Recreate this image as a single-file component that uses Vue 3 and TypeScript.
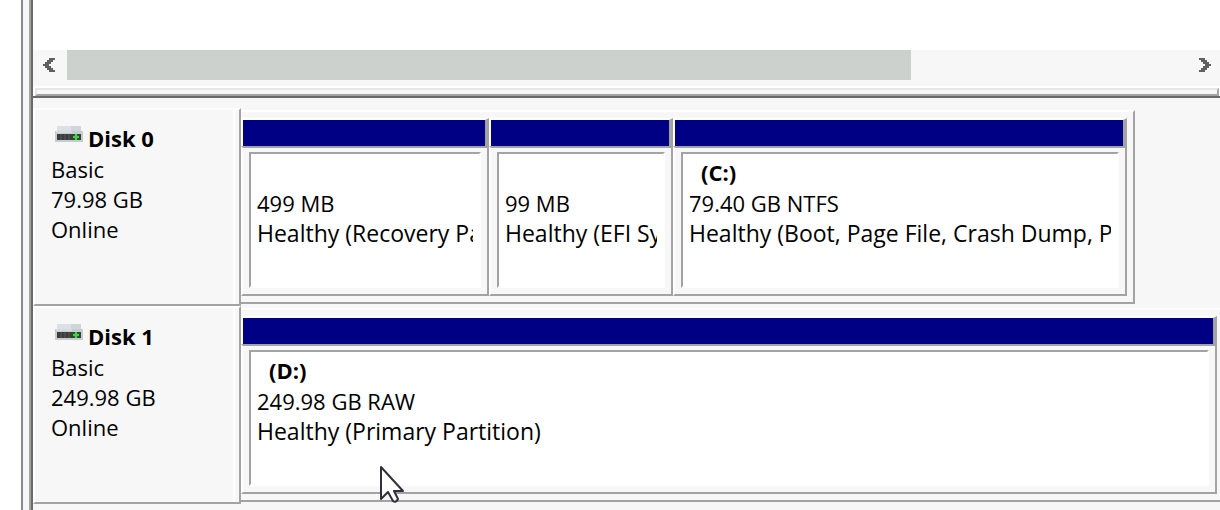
<script setup lang="ts">
interface Partition {
  name: string
  size: string
  status: string
  span: number
}

interface Disk {
  name: string
  kind: string
  capacity: string
  state: string
  full: boolean
  partitions: Partition[]
}

const disks: Disk[] = [
  {
    name: 'Disk 0',
    kind: 'Basic',
    capacity: '79.98 GB',
    state: 'Online',
    full: false,
    partitions: [
      { name: '', size: '499 MB', status: 'Healthy (Recovery Pa', span: 248 },
      { name: '', size: '99 MB', status: 'Healthy (EFI Sy', span: 184 },
      { name: '(C:)', size: '79.40 GB NTFS', status: 'Healthy (Boot, Page File, Crash Dump, P', span: 454 },
    ],
  },
  {
    name: 'Disk 1',
    kind: 'Basic',
    capacity: '249.98 GB',
    state: 'Online',
    full: true,
    partitions: [
      { name: '(D:)', size: '249.98 GB RAW', status: 'Healthy (Primary Partition)', span: 976 },
    ],
  },
]
</script>

<template>
  <div class="window">
    <div class="gutter"></div>
    <main class="console">
      <section class="volumes">
        <div class="list"></div>
        <div class="scrollbar">
          <button class="arrow back" type="button" aria-label="Scroll left">
            <svg width="12" height="14" viewBox="0 0 12 14" shape-rendering="crispEdges">
              <path fill="#606060" d="M6 0h6v2h-2v2H8v2H6v2h2v2h2v2h2v2H6v-2H4v-2H2V8H0V6h2V4h2V2h2z" />
            </svg>
          </button>
          <div class="track"><div class="thumb"></div></div>
          <button class="arrow forward" type="button" aria-label="Scroll right">
            <svg width="12" height="14" viewBox="0 0 12 14" shape-rendering="crispEdges">
              <path fill="#606060" d="M6 0H0v2h2v2h2v2h2v2H4v2H2v2H0v2h6v-2h2v-2h2V8h2V6h-2V4H8V2H6z" />
            </svg>
          </button>
        </div>
        <div class="splitter"></div>
      </section>

      <section class="disks">
        <article v-for="disk in disks" :key="disk.name" class="disk">
          <div class="label">
            <h2 class="title">
              <svg class="drive" width="28" height="16" viewBox="0 0 28 16">
                <path fill="#dce0e4" d="M2 0h24v5H2z" />
                <path fill="#d0d5d9" d="M16 0h10v5H16z" />
                <path fill="#c6cdd0" d="M0 5h28v11H0z" />
                <path fill="#d6dbdf" d="M1 5h16v2H1z" />
                <path fill="#3b3e3b" d="M2 8h24v6H2z" />
                <path fill="#484b48" d="M5 8h2v6H5zM9 8h2v6H9zM13 8h2v6h-2z" />
                <path fill="#158c1b" d="M19 9h4v4h-4z" />
                <path fill="#39d93d" d="M20 8h2v6h-2zM18 10h6v2h-6z" />
              </svg>
              <span>{{ disk.name }}</span>
            </h2>
            <p>{{ disk.kind }}</p>
            <p>{{ disk.capacity }}</p>
            <p>{{ disk.state }}</p>
          </div>
          <div class="graph" :class="{ full: disk.full }">
            <div
              v-for="part in disk.partitions"
              :key="part.size"
              class="partition"
              :style="{ flexGrow: part.span }"
            >
              <div class="stripe"></div>
              <div class="body">
                <div class="box">
                  <p class="name">{{ part.name }}</p>
                  <p>{{ part.size }}</p>
                  <p class="status">{{ part.status }}</p>
                </div>
              </div>
            </div>
          </div>
        </article>
      </section>
    </main>

    <svg class="cursor" width="26" height="40" viewBox="0 0 26 40">
      <path
        fill="#fff"
        stroke="#30303c"
        stroke-width="2"
        stroke-linejoin="round"
        d="M2 2v32l7-7 5 9q3 2 5-2l-4-8h9z"
      />
    </svg>
  </div>
</template>

<style>
body {
  margin: 0;
  background: #fff;
}
</style>

<style scoped>
.window {
  position: relative;
  display: flex;
  height: 100vh;
  padding-left: 21px;
  overflow: hidden;
  box-sizing: border-box;
  color: #000;
  font-family: "Open Sans", "Noto Sans", sans-serif;
  font-size: 22px;
  line-height: 30px;
}

.gutter {
  flex: none;
  width: 6px;
  border-left: 2px solid #858996;
  border-right: 2px solid #a3a3a3;
  background: #f7f7f7;
}

.console {
  flex: 1;
  min-width: 0;
  border-left: 2px solid #696969;
}

.volumes {
  border-bottom: 2px solid #696969;
}

.list {
  height: 50px;
  background: #fff;
}

.scrollbar {
  display: flex;
  height: 30px;
  padding-bottom: 6px;
  border-bottom: 2px solid #fff;
  background: #f7f7f7;
}

.arrow {
  display: grid;
  place-items: center;
  box-sizing: border-box;
  width: 34px;
  padding: 0;
  border: 0;
  background: transparent;
}

.arrow.back {
  padding-right: 2px;
}

.arrow.forward {
  padding-left: 4px;
}

.track {
  flex: 1;
}

.thumb {
  width: 75.4%;
  height: 100%;
  background: #cdd1cd;
}

.splitter {
  height: 4px;
  margin: 0 1px 0 2px;
  border: 2px solid #a3a3a3;
  border-top-color: #e6e6e6;
  border-left-color: #e6e6e6;
  background: #f7f7f7;
}

.disks {
  height: 100%;
  padding-top: 10px;
  background: #f7f7f7;
}

.disk {
  display: flex;
  height: 198px;
}

.label {
  flex: none;
  width: 188px;
  padding: 13px 0 0 16px;
  border: 2px solid #fff;
  border-right-color: #a3a3a3;
  border-bottom-color: #a3a3a3;
  box-shadow: inset -4px 0 #f7f7f7, inset -6px 0 #fff;
}

.title {
  display: flex;
  align-items: flex-start;
  gap: 5px;
  height: 31px;
  margin: 0;
  padding-left: 4px;
  font-size: 22px;
  font-weight: 700;
  line-height: 30px;
}

.drive {
  margin-top: 3px;
}

p {
  height: 30px;
  margin: 0;
  white-space: nowrap;
}

.graph {
  display: flex;
  box-sizing: border-box;
  flex: 1;
  min-width: 0;
  height: 194px;
  margin: 2px 85px 0 0;
  padding: 6px 6px 6px 0;
  border: 2px solid #a3a3a3;
  border-top-color: #fff;
  border-left: 0;
}

.graph.full {
  margin-right: 0;
  padding-right: 3px;
  border-right: 0;
}

.partition {
  display: flex;
  flex-direction: column;
  flex-basis: 0;
  min-width: 0;
}

.stripe {
  height: 26px;
  border-top: 2px solid #fff;
  border-left: 2px solid #fff;
  border-right: 4px solid #a3a3a3;
  background: #000084;
}

.body {
  flex: 1;
  min-height: 0;
  padding: 4px 6px 6px;
  border: 2px solid #a3a3a3;
  border-left-color: #fff;
}

.box {
  height: 129px;
  padding: 3px 6px 0;
  border: 2px solid #a3a3a3;
  border-right-color: #fff;
  border-bottom-color: #fff;
  background: #fff;
}

.box p {
  overflow: hidden;
}

.box .name {
  height: 31px;
  padding-left: 12px;
  font-weight: 700;
}

.box .status {
  font-size: 23px;
}

.cursor {
  position: absolute;
  left: 379px;
  top: 465px;
}
</style>
